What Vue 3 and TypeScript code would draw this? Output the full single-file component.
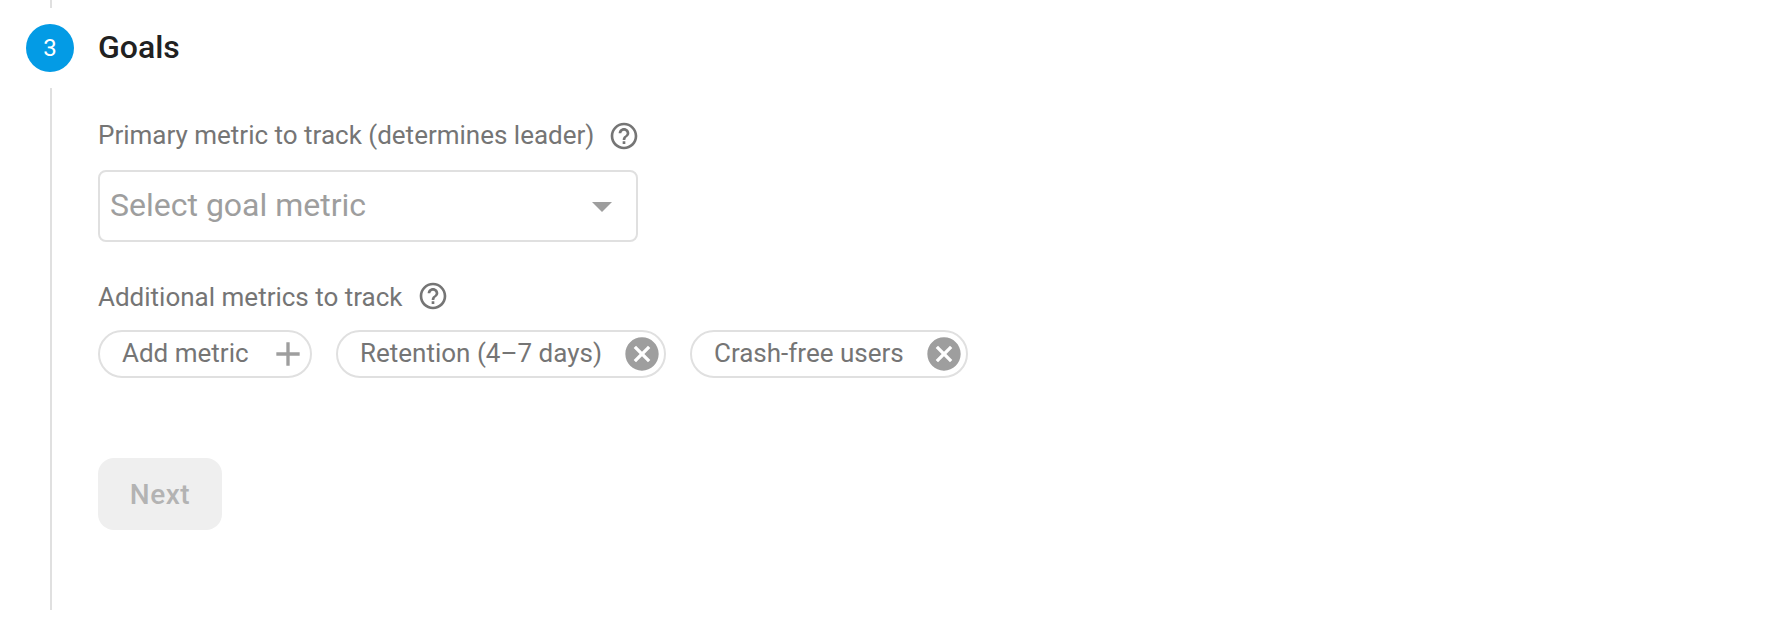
<script setup lang="ts">
import { ref } from 'vue'

interface Metric {
  id: string
  label: string
}

const metrics = ref<Metric[]>([
  { id: 'retention', label: 'Retention (4–7 days)' },
  { id: 'crash', label: 'Crash-free users' },
])

const helpPath =
  'M11 18h2v-2h-2v2zm1-16C6.48 2 2 6.48 2 12s4.48 10 10 10 10-4.48 10-10S17.52 2 12 2zm0 18c-4.41 0-8-3.59-8-8s3.59-8 8-8 8 3.59 8 8-3.59 8-8 8zm0-14c-2.21 0-4 1.79-4 4h2c0-1.1.9-2 2-2s2 .9 2 2c0 2-3 1.75-3 5h2c0-2.25 3-2.5 3-5 0-2.21-1.79-4-4-4z'
const cancelPath =
  'M12 2C6.47 2 2 6.47 2 12s4.47 10 10 10 10-4.47 10-10S17.53 2 12 2zm5 13.59L15.59 17 12 13.41 8.41 17 7 15.59 10.59 12 7 8.41 8.41 7 12 10.59 15.59 7 17 8.41 13.41 12 17 15.59z'

function removeMetric(id: string): void {
  metrics.value = metrics.value.filter((m) => m.id !== id)
}
</script>

<template>
  <main class="step">
    <div class="rail">
      <span class="line line-top"></span>
      <span class="number">3</span>
      <span class="line line-bottom"></span>
    </div>
    <section class="content">
      <h2 class="title">Goals</h2>

      <div class="label primary">
        <span class="label-text">Primary metric to track (determines leader)</span>
        <svg class="help" viewBox="0 0 24 24"><path :d="helpPath" /></svg>
      </div>
      <div class="select">
        <span class="placeholder">Select goal metric</span>
        <svg class="arrow" viewBox="0 0 20 10"><path d="M0 0h20L10 10z" /></svg>
      </div>

      <div class="label additional">
        <span class="label-text">Additional metrics to track</span>
        <svg class="help" viewBox="0 0 24 24"><path :d="helpPath" /></svg>
      </div>
      <div class="chips">
        <div class="chip add">
          <span class="chip-text">Add metric</span>
          <svg class="chip-icon" viewBox="0 0 24 24"><path d="M19 13h-6v6h-2v-6H5v-2h6V5h2v6h6v2z" /></svg>
        </div>
        <div v-for="metric in metrics" :key="metric.id" class="chip" :class="metric.id">
          <span class="chip-text">{{ metric.label }}</span>
          <svg class="chip-icon" viewBox="0 0 24 24" @click="removeMetric(metric.id)"><path :d="cancelPath" /></svg>
        </div>
      </div>

      <button class="next" type="button" disabled>Next</button>
    </section>
  </main>
</template>

<style>
body {
  margin: 0;
  background: #fff;
}
</style>

<style scoped>
.step {
  display: flex;
  height: 618px;
  box-sizing: border-box;
  overflow: hidden;
  font-family: Roboto, sans-serif;
  color: #757575;
}

.rail {
  display: flex;
  flex-direction: column;
  align-items: center;
  width: 48px;
  height: 610px;
  margin-left: 26px;
  flex: none;
}

.line {
  width: 2px;
  margin-left: 2px;
  background: #e0e0e0;
}

.line-top {
  height: 8px;
}

.line-bottom {
  flex: 1;
}

.number {
  width: 48px;
  height: 48px;
  margin: 16px 0;
  border-radius: 50%;
  background: #039be5;
  color: #fff;
  font-size: 24px;
  line-height: 48px;
  text-align: center;
}

.content {
  margin-left: 24px;
}

.title {
  margin: 23px 0 0;
  font-size: 32px;
  font-weight: 500;
  line-height: 48px;
  color: #212121;
}

.label {
  display: flex;
  align-items: center;
  height: 32px;
  font-size: 26px;
  line-height: 32px;
  white-space: nowrap;
}

.primary {
  margin-top: 49px;
}

.primary .label-text {
  padding-bottom: 2px;
}

.additional {
  margin-top: 38px;
}

.additional .label-text {
  padding-top: 2px;
}

.help {
  width: 32px;
  height: 32px;
  margin-left: 14px;
  fill: #757575;
}

.select {
  display: flex;
  align-items: center;
  justify-content: space-between;
  box-sizing: border-box;
  width: 540px;
  height: 72px;
  margin-top: 18px;
  padding: 0 24px 0 10px;
  border: 2px solid #e0e0e0;
  border-radius: 8px;
}

.placeholder {
  padding-bottom: 2px;
  font-size: 32px;
  line-height: 40px;
  color: #9e9e9e;
}

.arrow {
  width: 20px;
  height: 10px;
  margin-top: 2px;
  fill: #9e9e9e;
}

.chips {
  display: flex;
  gap: 24px;
  margin-top: 18px;
}

.chip {
  display: flex;
  align-items: center;
  justify-content: space-between;
  box-sizing: border-box;
  height: 48px;
  padding: 0 2px 0 22px;
  border: 2px solid #e0e0e0;
  border-radius: 24px;
  font-size: 26px;
  line-height: 42px;
  white-space: nowrap;
}

.chip.add {
  width: 214px;
}

.chip.retention {
  width: 330px;
}

.chip.crash {
  width: 278px;
}

.chip-text {
  padding-bottom: 2px;
}

.chip-icon {
  flex: none;
  width: 40px;
  height: 40px;
  fill: #9e9e9e;
}

.next {
  display: block;
  width: 124px;
  height: 72px;
  margin: 80px 0 0;
  padding: 2px 0 0;
  border: 0;
  border-radius: 16px;
  background: #efefef;
  color: #b3b3b3;
  font-family: inherit;
  font-size: 28px;
  font-weight: 500;
  line-height: 70px;
  letter-spacing: 0.5px;
  text-align: center;
}
</style>
